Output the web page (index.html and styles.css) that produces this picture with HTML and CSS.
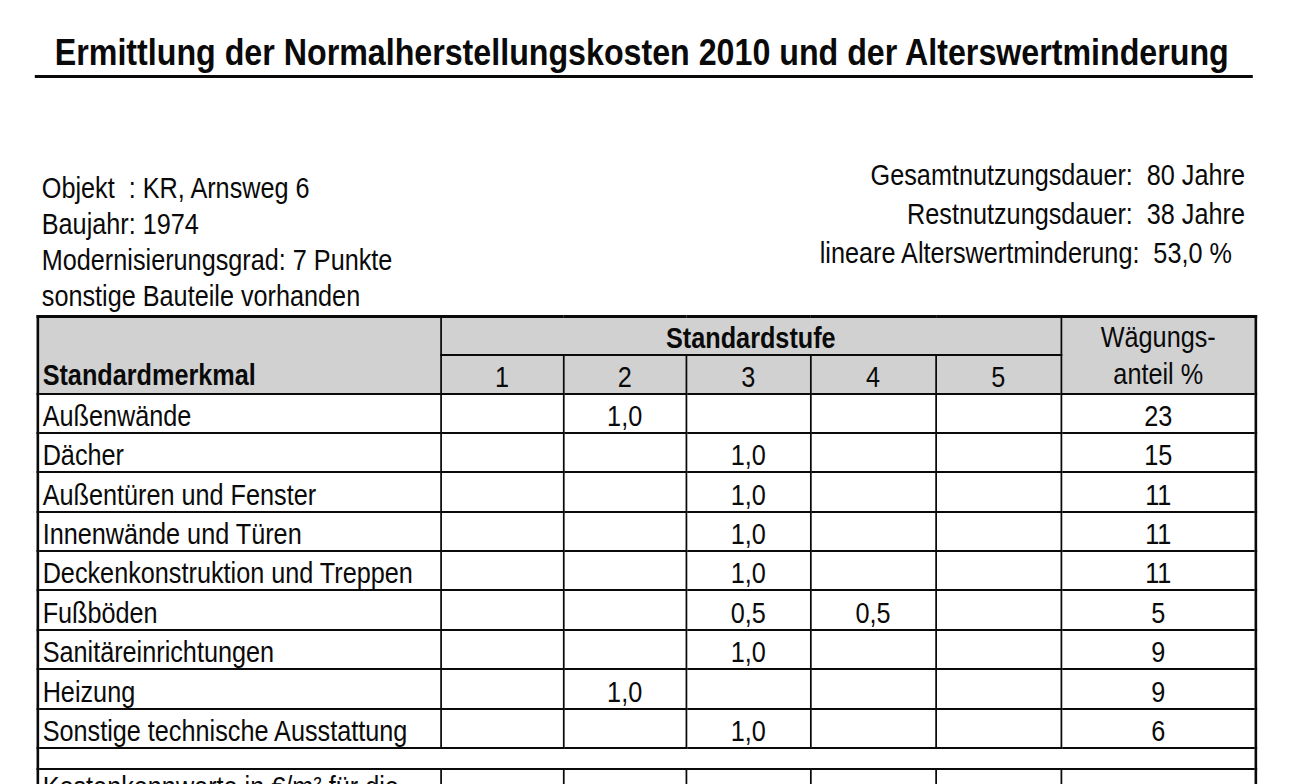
FILE: index.html
```html
<!DOCTYPE html>
<html lang="de">
<head>
<meta charset="utf-8">
<title>Ermittlung der Normalherstellungskosten 2010</title>
<link rel="stylesheet" href="styles.css">
</head>
<body>
<div class="page">
  <h1 class="title">Ermittlung der Normalherstellungskosten 2010 und der Alterswertminderung</h1>

  <div class="info">
    <div class="info-left">
      <div>Objekt&nbsp; : KR, Arnsweg 6</div>
      <div>Baujahr: 1974</div>
      <div>Modernisierungsgrad: 7 Punkte</div>
      <div>sonstige Bauteile vorhanden</div>
    </div>
    <div class="info-right">
      <div class="line">Gesamtnutzungsdauer:<span class="val">80 Jahre</span></div>
      <div class="line">Restnutzungsdauer:<span class="val">38 Jahre</span></div>
      <div class="line pct">lineare Alterswertminderung:<span class="val">53,0 %</span></div>
    </div>
  </div>

  <table class="grid">
    <colgroup>
      <col class="c-name">
      <col class="c-step"><col class="c-step"><col class="c-step3"><col class="c-step4"><col class="c-step4">
      <col class="c-weight">
    </colgroup>
    <thead>
      <tr class="h1row">
        <th class="hname" rowspan="2">Standardmerkmal</th>
        <th class="hstufe" colspan="5">Standardstufe</th>
        <th class="hweight" rowspan="2">Wägungs-<br>anteil %</th>
      </tr>
      <tr class="h2row">
        <th class="num">1</th><th class="num">2</th><th class="num">3</th><th class="num">4</th><th class="num">5</th>
      </tr>
    </thead>
    <tbody>
      <tr><td class="name">Außenwände</td><td></td><td class="num">1,0</td><td></td><td></td><td></td><td class="num">23</td></tr>
      <tr><td class="name">Dächer</td><td></td><td></td><td class="num">1,0</td><td></td><td></td><td class="num">15</td></tr>
      <tr><td class="name">Außentüren und Fenster</td><td></td><td></td><td class="num">1,0</td><td></td><td></td><td class="num">11</td></tr>
      <tr><td class="name">Innenwände und Türen</td><td></td><td></td><td class="num">1,0</td><td></td><td></td><td class="num">11</td></tr>
      <tr><td class="name">Deckenkonstruktion und Treppen</td><td></td><td></td><td class="num">1,0</td><td></td><td></td><td class="num">11</td></tr>
      <tr><td class="name">Fußböden</td><td></td><td></td><td class="num">0,5</td><td class="num">0,5</td><td></td><td class="num">5</td></tr>
      <tr><td class="name">Sanitäreinrichtungen</td><td></td><td></td><td class="num">1,0</td><td></td><td></td><td class="num">9</td></tr>
      <tr><td class="name">Heizung</td><td></td><td class="num">1,0</td><td></td><td></td><td></td><td class="num">9</td></tr>
      <tr><td class="name">Sonstige technische Ausstattung</td><td></td><td></td><td class="num">1,0</td><td></td><td></td><td class="num">6</td></tr>
      <tr class="spacer"><td colspan="7"></td></tr>
      <tr class="cost"><td class="name">Kostenkennwerte in €/m² für die</td><td></td><td></td><td></td><td></td><td></td><td></td></tr>
    </tbody>
  </table>
</div>
</body>
</html>
```
FILE: styles.css
```css
html, body {
  margin: 0;
  padding: 0;
  background: #ffffff;
}

body {
  font-family: "Liberation Sans", Arial, sans-serif;
  color: #0a0a0a;
  overflow: hidden;
  height: 784px;
}

/* The document is set in a narrow sans face; emulate it by
   condensing the whole sheet horizontally. All horizontal sizes
   below are given before that condensing (visual = value x 0.87). */
.page {
  width: 1493px;
  transform: scaleX(0.87);
  transform-origin: 0 0;
}

.title {
  margin: 0 0 0 40px;
  width: 1377px;
  padding: 31px 0 0 23px;
  font-size: 37px;
  line-height: 44px;
  font-weight: bold;
  border-bottom: 3px solid #0a0a0a;
  white-space: nowrap;
}

.info {
  display: flex;
  justify-content: space-between;
  align-items: flex-start;
  margin-top: 78px;
  font-size: 29px;
}

.info-left {
  padding: 14px 0 0 48px;
  line-height: 36px;
}

.info-right {
  padding-right: 62px;
  line-height: 39px;
  text-align: right;
  white-space: nowrap;
}

.info-right .val {
  margin-left: 16px;
}

.info-right .line.pct {
  padding-right: 15px;
}

.grid {
  margin: 1px 0 0 42px;
  width: 1400px;
  table-layout: fixed;
  border-collapse: collapse;
  border-style: solid;
  border-color: #0a0a0a;
  border-width: 3px 3.5px;
  font-size: 29px;
}

.c-name { width: 463px; }
.c-step { width: 141px; }
.c-step3 { width: 143px; }
.c-step4 { width: 144px; }
.c-weight { width: 224px; }

.grid th,
.grid td {
  border-style: solid;
  border-color: #0a0a0a;
  border-width: 2.5px 2.8px;
  padding: 0 4px;
  line-height: 32px;
  vertical-align: bottom;
  white-space: nowrap;
}

.grid thead th {
  background: #d1d1d1;
  font-weight: normal;
}

.h1row { height: 38px; }
.h2row { height: 39px; }

.grid th.hname {
  text-align: left;
  font-weight: bold;
  padding-bottom: 2px;
}

.grid th.hstufe {
  font-weight: bold;
  text-align: center;
}

.grid th.hweight {
  text-align: center;
  line-height: 37px;
}

.num {
  text-align: center;
}

.grid tbody tr {
  height: 39.4px;
}

.grid td.name {
  text-align: left;
}

.grid tbody tr.spacer {
  height: 21px;
}

.grid tr.spacer td {
  border-left: none;
  border-right: none;
}

.grid tr.cost td {
  vertical-align: top;
  line-height: 34px;
  height: 40px;
}
```
